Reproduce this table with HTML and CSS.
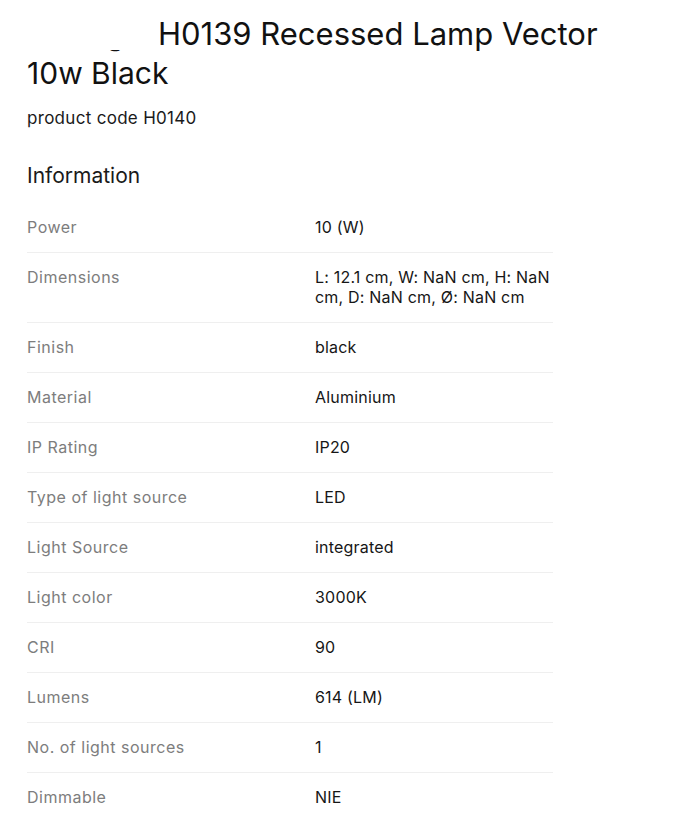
FILE: index.html
```html
<!DOCTYPE html>
<html lang="pl">
<head>
<meta charset="utf-8">
<title>H0140</title>
<link rel="stylesheet" href="styles.css">
</head>
<body>
<div class="page">
  <div class="overlay-title">H0139 Recessed Lamp Vector</div>
  <h1 class="product-title">Ceiling Recessed Vector H0140<br>10w Black</h1>
  <p class="product-code">product code H0140</p>
  <h2 class="section-title">Information</h2>
  <dl class="specs">
    <div class="row"><dt>Power</dt><dd>10 (W)</dd></div>
    <div class="row"><dt>Dimensions</dt><dd>L: 12.1 cm, W: NaN cm, H: NaN cm, D: NaN cm, Ø: NaN cm</dd></div>
    <div class="row"><dt>Finish</dt><dd>black</dd></div>
    <div class="row"><dt>Material</dt><dd>Aluminium</dd></div>
    <div class="row"><dt>IP Rating</dt><dd>IP20</dd></div>
    <div class="row"><dt>Type of light source</dt><dd>LED</dd></div>
    <div class="row"><dt>Light Source</dt><dd>integrated</dd></div>
    <div class="row"><dt>Light color</dt><dd>3000K</dd></div>
    <div class="row"><dt>CRI</dt><dd>90</dd></div>
    <div class="row"><dt>Lumens</dt><dd>614 (LM)</dd></div>
    <div class="row"><dt>No. of light sources</dt><dd>1</dd></div>
    <div class="row"><dt>Dimmable</dt><dd>NIE</dd></div>
  </dl>
</div>
</body>
</html>
```
FILE: styles.css
```css
html, body {
  margin: 0;
  padding: 0;
  background: #fff;
}
body {
  font-family: Inter, "Noto Sans", sans-serif;
  color: #161616;
  overflow: hidden;
}
.page {
  display: flow-root;
  position: relative;
  padding: 0 0 0 27px;
  width: 526px;
}
.overlay-title {
  position: absolute;
  top: 0;
  left: 0;
  width: 692px;
  height: 50px;
  background: #fff;
  box-sizing: border-box;
  padding: 16px 0 0 158px;
  font-size: 31px;
  line-height: 36px;
  font-weight: 400;
  color: #111;
  white-space: nowrap;
  z-index: 2;
}
.product-title {
  margin: 15px 0 0;
  font-size: 30px;
  line-height: 39px;
  font-weight: 400;
  color: #111;
  white-space: nowrap;
}
.product-code {
  margin: 15px 0 0;
  font-size: 17px;
  line-height: 20px;
  letter-spacing: 0.3px;
  color: #1a1a1a;
}
.section-title {
  margin: 36px 0 0;
  font-size: 21px;
  line-height: 24px;
  font-weight: 400;
  color: #1a1a1a;
}
.specs {
  margin: 15px 0 0;
  padding: 0;
}
.row {
  display: grid;
  grid-template-columns: 288px 1fr;
  padding: 14px 0 15px;
  border-bottom: 1px solid #efefef;
  font-size: 16px;
  line-height: 20px;
}
.row dt {
  color: #7d7d7d;
  letter-spacing: 0.5px;
}
.row dd {
  margin: 0;
  color: #161616;
  letter-spacing: 0.2px;
}
```
